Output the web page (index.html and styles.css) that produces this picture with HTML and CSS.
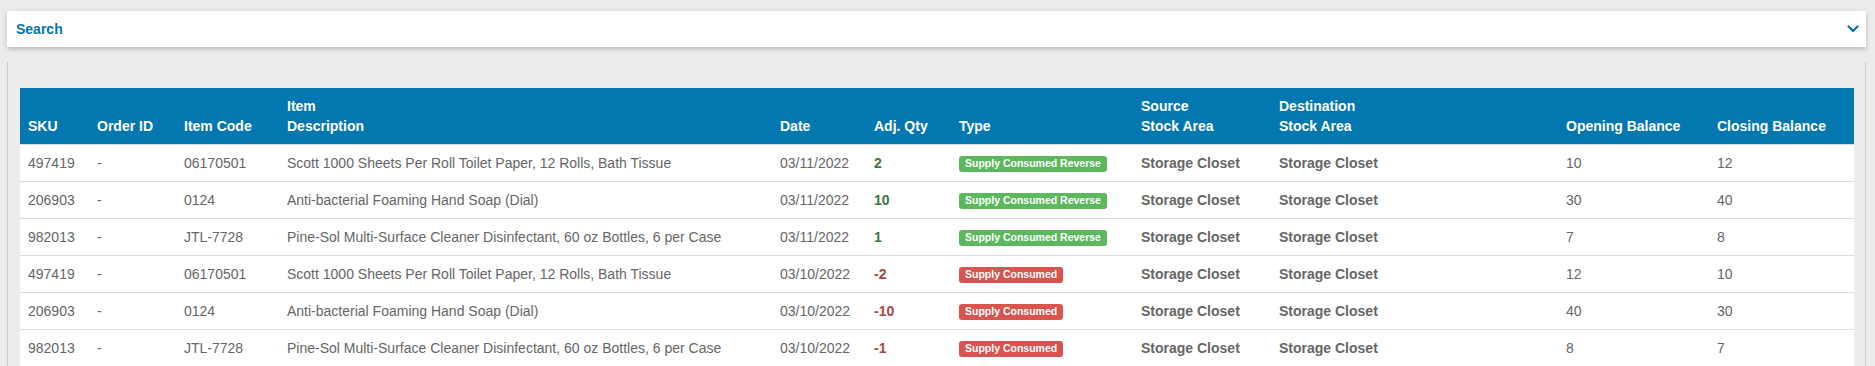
FILE: index.html
```html
<!DOCTYPE html>
<html lang="en">
<head>
    <meta charset="UTF-8">
    <meta name="viewport" content="width=device-width, initial-scale=1.0">
    <title>Stock Adjustments</title>
    <link rel="stylesheet" href="styles.css">
</head>
<body>

<!-- Search panel (collapsed) -->
<div class="search-card">
    <span class="search-title">Search</span>
    <svg class="chevron" width="12" height="8" viewBox="0 0 12 8">
        <polyline points="1.5,1.5 6,6 10.5,1.5" fill="none" stroke="#0374ab" stroke-width="2.2" stroke-linecap="round" stroke-linejoin="round"/>
    </svg>
</div>

<!-- Adjustments table -->
<div class="results-panel">
    <table class="adj-table">
        <colgroup>
            <col class="c-sku">
            <col class="c-order">
            <col class="c-code">
            <col class="c-desc">
            <col class="c-date">
            <col class="c-qty">
            <col class="c-type">
            <col class="c-src">
            <col class="c-dst">
            <col class="c-open">
            <col class="c-close">
        </colgroup>
        <thead>
            <tr>
                <th>SKU</th>
                <th>Order ID</th>
                <th>Item Code</th>
                <th>Item<br>Description</th>
                <th>Date</th>
                <th>Adj. Qty</th>
                <th>Type</th>
                <th>Source<br>Stock Area</th>
                <th>Destination<br>Stock Area</th>
                <th>Opening Balance</th>
                <th>Closing Balance</th>
            </tr>
        </thead>
        <tbody>
            <tr>
                <td>497419</td>
                <td>-</td>
                <td>06170501</td>
                <td>Scott 1000 Sheets Per Roll Toilet Paper, 12 Rolls, Bath Tissue</td>
                <td>03/11/2022</td>
                <td class="qty-plus">2</td>
                <td><span class="label label-green">Supply Consumed Reverse</span></td>
                <td class="area">Storage Closet</td>
                <td class="area">Storage Closet</td>
                <td>10</td>
                <td>12</td>
            </tr>
            <tr>
                <td>206903</td>
                <td>-</td>
                <td>0124</td>
                <td>Anti-bacterial Foaming Hand Soap (Dial)</td>
                <td>03/11/2022</td>
                <td class="qty-plus">10</td>
                <td><span class="label label-green">Supply Consumed Reverse</span></td>
                <td class="area">Storage Closet</td>
                <td class="area">Storage Closet</td>
                <td>30</td>
                <td>40</td>
            </tr>
            <tr>
                <td>982013</td>
                <td>-</td>
                <td>JTL-7728</td>
                <td>Pine-Sol Multi-Surface Cleaner Disinfectant, 60 oz Bottles, 6 per Case</td>
                <td>03/11/2022</td>
                <td class="qty-plus">1</td>
                <td><span class="label label-green">Supply Consumed Reverse</span></td>
                <td class="area">Storage Closet</td>
                <td class="area">Storage Closet</td>
                <td>7</td>
                <td>8</td>
            </tr>
            <tr>
                <td>497419</td>
                <td>-</td>
                <td>06170501</td>
                <td>Scott 1000 Sheets Per Roll Toilet Paper, 12 Rolls, Bath Tissue</td>
                <td>03/10/2022</td>
                <td class="qty-minus">-2</td>
                <td><span class="label label-red">Supply Consumed</span></td>
                <td class="area">Storage Closet</td>
                <td class="area">Storage Closet</td>
                <td>12</td>
                <td>10</td>
            </tr>
            <tr>
                <td>206903</td>
                <td>-</td>
                <td>0124</td>
                <td>Anti-bacterial Foaming Hand Soap (Dial)</td>
                <td>03/10/2022</td>
                <td class="qty-minus">-10</td>
                <td><span class="label label-red">Supply Consumed</span></td>
                <td class="area">Storage Closet</td>
                <td class="area">Storage Closet</td>
                <td>40</td>
                <td>30</td>
            </tr>
            <tr>
                <td>982013</td>
                <td>-</td>
                <td>JTL-7728</td>
                <td>Pine-Sol Multi-Surface Cleaner Disinfectant, 60 oz Bottles, 6 per Case</td>
                <td>03/10/2022</td>
                <td class="qty-minus">-1</td>
                <td><span class="label label-red">Supply Consumed</span></td>
                <td class="area">Storage Closet</td>
                <td class="area">Storage Closet</td>
                <td>8</td>
                <td>7</td>
            </tr>
        </tbody>
    </table>
</div>

</body>
</html>
```

FILE: styles.css
```css
body {
    font-family: "Liberation Sans", Arial, sans-serif;
    font-size: 14px;
    color: #666;
    background: #ececec;
    margin: 0;
    padding: 11px 9px 0 7px;
}

/* Tarjeta de busqueda */
.search-card {
    display: flex;
    align-items: center;
    justify-content: space-between;
    height: 36px;
    padding: 0 7px 0 9px;
    background: #fff;
    box-shadow: 0 2px 5px rgba(0, 0, 0, 0.22);
}

.search-title {
    color: #0374ab;
    font-weight: bold;
    font-size: 14px;
}

.chevron {
    display: block;
}

/* Panel de resultados */
.results-panel {
    margin-top: 15px;
    border-left: 1px solid #c9c9c9;
    border-right: 1px solid #c9c9c9;
    padding: 26px 12px 0 12px;
}

.adj-table {
    width: 100%;
    table-layout: fixed;
    border-collapse: collapse;
    background: #fff;
    line-height: 20px;
}

.c-sku { width: 69px; }
.c-order { width: 87px; }
.c-code { width: 103px; }
.c-desc { width: 493px; }
.c-date { width: 94px; }
.c-qty { width: 85px; }
.c-type { width: 182px; }
.c-src { width: 138px; }
.c-dst { width: 287px; }
.c-open { width: 151px; }
.c-close { width: 145px; }

.adj-table th {
    background: #0378b0;
    color: #fff;
    font-weight: bold;
    text-align: left;
    vertical-align: bottom;
    padding: 8px;
    white-space: nowrap;
}

.adj-table td {
    padding: 8px;
    border-top: 1px solid #ddd;
    vertical-align: middle;
    white-space: nowrap;
}

.qty-plus {
    color: #3c763d;
    font-weight: bold;
}

.qty-minus {
    color: #a94442;
    font-weight: bold;
}

.area {
    font-weight: bold;
}

/* Etiquetas de tipo */
.label {
    display: inline-block;
    font-size: 10.5px;
    font-weight: bold;
    line-height: 1;
    color: #fff;
    padding: 2px 6px 3px 6px;
    border-radius: 3px;
    vertical-align: 1px;
}

.label-green {
    background: #5cb85c;
}

.label-red {
    background: #d9534f;
}
```
